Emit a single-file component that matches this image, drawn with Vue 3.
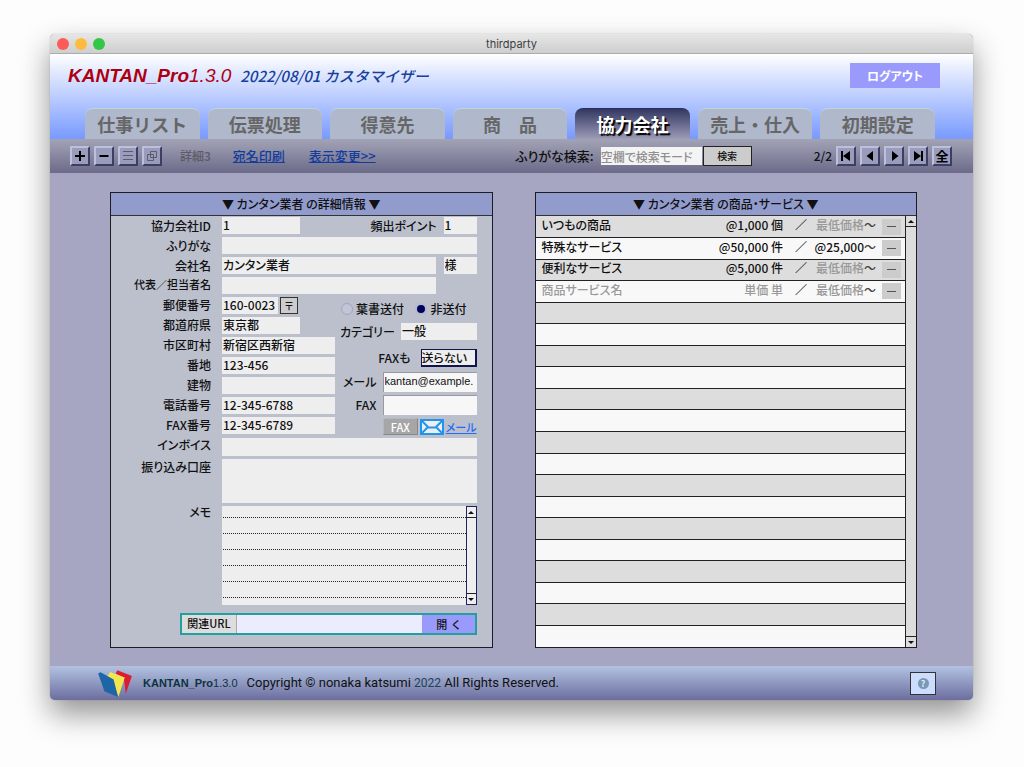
<script setup>
import { ref } from 'vue'

const tabs = ['仕事リスト', '伝票処理', '得意先', '商　品', '協力会社', '売上・仕入', '初期設定']
const activeTab = ref('協力会社')
const search = ref('')
const mailing = ref('no')
const faxOption = ref('送らない')

const addressRows = [
  { id: 'pref', label: '都道府県', value: '東京都', size: 'w-pref' },
  { id: 'city', label: '市区町村', value: '新宿区西新宿', size: 'w-wide' },
  { id: 'street', label: '番地', value: '123-456', size: 'w-wide' },
  { id: 'building', label: '建物', value: '', size: 'w-wide' },
  { id: 'phone', label: '電話番号', value: '12-345-6788', size: 'w-wide' },
  { id: 'faxno', label: 'FAX番号', value: '12-345-6789', size: 'w-wide' },
]

const products = [
  { name: 'いつもの商品', price: '@1,000', unit: '個', min: '最低価格', set: false },
  { name: '特殊なサービス', price: '@50,000', unit: '件', min: '@25,000', set: true },
  { name: '便利なサービス', price: '@5,000', unit: '件', min: '最低価格', set: false },
  { name: '商品サービス名', price: '単価', unit: '単', min: '最低価格', set: false, blank: true },
]
const emptyRows = 16
</script>

<template>
  <div class="desktop">
    <div class="window">
      <div class="titlebar">
        <span class="light red"></span><span class="light amber"></span><span class="light green"></span>
        <span class="wintitle">thirdparty</span>
      </div>

      <header class="header">
        <div class="brandrow">
          <h1 class="brand"><b>KANTAN_Pro</b><span>1.3.0</span></h1>
          <span class="subtitle">2022/08/01 カスタマイザー</span>
          <button class="logout" type="button">ログアウト</button>
        </div>
        <nav class="tabs">
          <button
            v-for="t in tabs"
            :key="t"
            type="button"
            class="tab"
            :class="{ active: t === activeTab }"
            @click="activeTab = t"
          >{{ t }}</button>
        </nav>
      </header>

      <div class="toolbar">
        <div class="btns">
          <button class="sq" type="button" aria-label="追加">
            <svg viewBox="0 0 14 14"><path d="M7 2v10M2 7h10" stroke="#000" stroke-width="2" /></svg>
          </button>
          <button class="sq" type="button" aria-label="削除">
            <svg viewBox="0 0 14 14"><path d="M2.500 7h9" stroke="#000" stroke-width="2" /></svg>
          </button>
          <button class="sq" type="button" aria-label="一覧">
            <svg viewBox="0 0 14 14"><path d="M2 2.500h10M2 6.500h10M2 10.500h10" stroke="#5c5c6c" stroke-width="1" /></svg>
          </button>
          <button class="sq" type="button" aria-label="複製">
            <svg viewBox="0 0 14 14"><path d="M5.500 2.500h6v6h-6zM2.500 5.500h6v6h-6z" fill="none" stroke="#5c5c6c" stroke-width="1" /></svg>
          </button>
        </div>
        <span class="detail">詳細3</span>
        <a href="#" class="tool-link">宛名印刷</a>
        <a href="#" class="tool-link second">表示変更&gt;&gt;</a>
        <label class="search-label" for="search">ふりがな検索:</label>
        <input id="search" v-model="search" class="search" placeholder="空欄で検索モード" />
        <button class="search-btn" type="button">検索</button>
        <span class="count">2/2</span>
        <div class="btns">
          <button class="sq" type="button" aria-label="最初">
            <svg viewBox="0 0 14 14"><path d="M2 2h2v10H2zM11 2v10L4 7z" fill="#000" /></svg>
          </button>
          <button class="sq" type="button" aria-label="前">
            <svg viewBox="0 0 14 14"><path d="M10 2v10L3.500 7z" fill="#000" /></svg>
          </button>
          <button class="sq" type="button" aria-label="次">
            <svg viewBox="0 0 14 14"><path d="M5 2v10L11.500 7z" fill="#000" /></svg>
          </button>
          <button class="sq" type="button" aria-label="最後">
            <svg viewBox="0 0 14 14"><path d="M10 2h2v10h-2zM3 2v10L10 7z" fill="#000" /></svg>
          </button>
          <button class="sq all" type="button">全</button>
        </div>
      </div>

      <main class="main">
        <section class="panel form">
          <h2 class="panel-head">▼ カンタン業者 の詳細情報 ▼</h2>
          <div class="fields">
            <div class="row">
              <label class="lab" for="cid">協力会社ID</label>
              <input id="cid" class="fld w-pref" value="1" />
              <label class="lab-end" for="point">頻出ポイント</label>
              <input id="point" class="fld w-short" value="1" />
            </div>
            <div class="row">
              <label class="lab" for="kana">ふりがな</label>
              <input id="kana" class="fld grow" />
            </div>
            <div class="row">
              <label class="lab" for="company">会社名</label>
              <input id="company" class="fld grow" value="カンタン業者" />
              <input class="fld w-short apart" value="様" aria-label="敬称" />
            </div>
            <div class="row">
              <label class="lab small" for="rep">代表／担当者名</label>
              <input id="rep" class="fld grow rep" />
            </div>

            <div class="split">
              <div class="stack">
                <div class="row">
                  <label class="lab" for="zip">郵便番号</label>
                  <input id="zip" class="fld w-zip" value="160-0023" />
                  <button class="zip-btn" type="button">〒</button>
                </div>
                <div v-for="r in addressRows" :key="r.id" class="row">
                  <label class="lab" :for="r.id">{{ r.label }}</label>
                  <input :id="r.id" class="fld" :class="r.size" :value="r.value" />
                </div>
              </div>
              <div class="contact">
                <div class="radios">
                  <label><input v-model="mailing" type="radio" name="mailing" value="yes" />葉書送付</label>
                  <label><input v-model="mailing" type="radio" name="mailing" value="no" />非送付</label>
                </div>
                <div class="crow">
                  <label for="cat">カテゴリー</label>
                  <input id="cat" class="fld w-cat" value="一般" />
                </div>
                <div class="crow faxopt">
                  <label for="faxopt">FAXも</label>
                  <select id="faxopt" v-model="faxOption" class="pick">
                    <option>送らない</option>
                    <option>送る</option>
                  </select>
                </div>
                <div class="crow">
                  <label for="mail">メール</label>
                  <input id="mail" class="sunk" value="kantan@example." />
                </div>
                <div class="crow">
                  <label for="fax">FAX</label>
                  <input id="fax" class="sunk" />
                </div>
                <div class="crow send">
                  <button class="fax-btn" type="button">FAX</button>
                  <button class="mail-btn" type="button" aria-label="メール送信">
                    <svg viewBox="0 0 24 16">
                      <rect x="1" y="1" width="22" height="14" fill="#eee" stroke="#1e96f0" stroke-width="2" />
                      <path d="M1 1L8 8L1 15M23 1L16 8L23 15M8 8.500h8" fill="none" stroke="#1e96f0" stroke-width="2" />
                    </svg>
                  </button>
                  <a href="#" class="mail-link">メール</a>
                </div>
              </div>
            </div>

            <div class="row">
              <label class="lab raised" for="invoice">インボイス</label>
              <input id="invoice" class="fld grow invoice" />
            </div>
            <div class="row top">
              <label class="lab" for="bank">振り込み口座</label>
              <textarea id="bank" class="fld grow bank"></textarea>
            </div>
            <div class="row top">
              <label class="lab raised" for="memo">メモ</label>
              <textarea id="memo" class="fld grow memo"></textarea>
              <div class="scroll navy">
                <span class="up"></span><span class="down"></span>
              </div>
            </div>
            <div class="url">
              <label for="url">関連URL</label>
              <input id="url" />
              <button type="button">開&nbsp; く</button>
            </div>
          </div>
        </section>

        <section class="panel list">
          <h2 class="panel-head">▼ カンタン業者 の商品・サービス ▼</h2>
          <div class="listbody">
            <table>
              <tbody>
                <tr v-for="p in products" :key="p.name" :class="{ blank: p.blank }">
                  <td class="name">{{ p.name }}</td>
                  <td class="price">{{ p.price }} {{ p.unit }}</td>
                  <td class="slash">／</td>
                  <td class="min" :class="{ set: p.set }">{{ p.min }}<span>〜</span></td>
                  <td class="del"><button type="button" aria-label="削除"></button></td>
                </tr>
                <tr v-for="n in emptyRows" :key="n"><td colspan="5"></td></tr>
              </tbody>
            </table>
            <div class="scroll">
              <span class="up"></span><span class="down"></span>
            </div>
          </div>
        </section>
      </main>

      <footer class="footer">
        <svg class="logo" viewBox="0 0 100 80">
          <path d="M52 10L57 1L100 18L82 70L76 24Z" fill="#dc1c30" />
          <path d="M28 18L36 6L79 22L60 80L44 30Z" fill="#f2e650" />
          <path d="M0 10L7 7L46 28L59 80L19 64Z" fill="#1c66a8" />
        </svg>
        <span class="fbrand"><b>KANTAN_Pro</b>1.3.0</span>
        <span class="copy">Copyright © nonaka katsumi <i>2022</i> All Rights Reserved.</span>
        <button class="help" type="button" aria-label="ヘルプ"><span>?</span></button>
      </footer>
    </div>
  </div>
</template>

<style>
html,
body {
  background: #fdfdfd;
}
</style>

<style scoped>
* {
  box-sizing: border-box;
}
.desktop {
  padding: 34px 51px 67px 50px;
  font-family: "Noto Sans CJK JP", "Noto Sans", sans-serif;
  font-size: 12px;
  line-height: 16px;
  font-weight: 500;
  color: #111;
  font-feature-settings: "palt";
}
button,
input,
select,
textarea {
  font: inherit;
  font-feature-settings: inherit;
  color: inherit;
  margin: 0;
  padding: 0;
  border: 0;
  border-radius: 0;
  outline: 0;
  min-width: 0;
}
.window {
  display: flex;
  flex-direction: column;
  border-radius: 5px;
  overflow: hidden;
  background: #a6a6c3;
  box-shadow: 0 0 1px rgba(0, 0, 0, 0.4), 0 14px 30px rgba(0, 0, 0, 0.42);
}
.titlebar {
  display: flex;
  align-items: center;
  gap: 6px;
  height: 20px;
  padding: 0 7px;
  position: relative;
  background: linear-gradient(#e6e6e6, #cecece);
  border-bottom: 1px solid #acacac;
}
.light {
  width: 12px;
  height: 12px;
  border-radius: 50%;
}
.red {
  background: #fc5b57;
}
.amber {
  background: #fdbc40;
}
.green {
  background: #33c748;
}
.wintitle {
  position: absolute;
  left: 0;
  right: 0;
  text-align: center;
  font-family: Inter, sans-serif;
  font-size: 11px;
  font-weight: 400;
  color: #404040;
}
.header {
  background: linear-gradient(#fff, #789aff);
}
.brandrow {
  display: flex;
  align-items: center;
  height: 43px;
  padding: 0 33px 0 18px;
}
.brand {
  margin: 0;
  font-family: "Liberation Sans", sans-serif;
  font-style: italic;
  font-size: 19px;
  font-weight: 400;
  line-height: 24px;
  color: #ac0010;
}
.subtitle {
  margin-left: 9px;
  font-size: 15px;
  font-style: italic;
  font-feature-settings: normal;
  color: #173f9c;
}
.logout {
  margin-left: auto;
  width: 90px;
  height: 25px;
  background: #9a9afc;
  color: #fff;
  font-size: 12px;
  font-weight: 700;
}
.tabs {
  display: grid;
  grid-template-columns: repeat(7, 1fr);
  gap: 8px;
  padding: 11px 38px 0 35px;
}
.tab {
  height: 31px;
  border-radius: 8px 8px 0 0;
  background: #b0b8cc;
  border-top: 1px solid #c2d4d8;
  color: #666;
  font-size: 18px;
  line-height: 24px;
  font-weight: 700;
  font-feature-settings: normal;
}
.tab.active {
  background: linear-gradient(#333760, #9c9cb8);
  border-top-color: #2c3058;
  color: #fff;
  text-shadow: 2px 2px 1px #000;
}
.toolbar {
  display: flex;
  align-items: center;
  height: 34px;
  padding: 0 21px 0 20px;
  background: linear-gradient(#a3a3b6, #6b6b8a);
}
.btns {
  display: flex;
  gap: 4px;
}
.sq {
  width: 20px;
  height: 20px;
  display: flex;
  align-items: center;
  justify-content: center;
  background: #999cbb;
  border: 2px solid;
  border-color: #bcc0dc #3c3e66 #3c3e66 #bcc0dc;
}
.sq svg {
  width: 14px;
  height: 14px;
}
.all {
  font-size: 13px;
  font-weight: 700;
  color: #000;
}
.detail {
  margin-left: 18px;
  color: #5c5c66;
}
.tool-link {
  margin-left: 22px;
  font-size: 13px;
  color: #143c9c;
}
.second {
  margin-left: 24px;
}
.search-label {
  margin-left: auto;
  font-size: 13px;
}
.search {
  width: 101px;
  height: 18px;
  margin: 0 1px 0 7px;
  background: #f4f4f4;
  font-size: 12px;
}
.search::placeholder {
  color: #909090;
  opacity: 1;
}
.search-btn {
  width: 49px;
  height: 20px;
  background: #ccc;
  border: 1px solid #222;
  font-size: 10px;
}
.count {
  margin: 0 4px 0 62px;
}
.main {
  display: grid;
  grid-template-columns: 1fr 1fr;
  gap: 42px;
  padding: 19px 56px 18px 60px;
}
.panel {
  display: flex;
  flex-direction: column;
  border: 1px solid #1c1c24;
  background: #bcc0cd;
  min-width: 0;
}
.panel-head {
  margin: 0;
  height: 23px;
  line-height: 21px;
  background: #919ccd;
  border-bottom: 1px solid #333;
  text-align: center;
  font-size: 12px;
  font-weight: 500;
}
.fields {
  display: flex;
  flex-direction: column;
  gap: 3px;
  padding: 1px 15px 12px 0;
}
.row {
  display: flex;
  align-items: center;
}
.row.top {
  align-items: flex-start;
}
.lab {
  width: 100px;
  margin-right: 11px;
  text-align: right;
  white-space: nowrap;
  flex-shrink: 0;
}
.stack .lab {
  line-height: 14px;
  padding-bottom: 2px;
}
.small {
  font-size: 11px;
  line-height: 14px;
  padding-bottom: 3px;
}
.raised {
  line-height: 12px;
  padding-bottom: 4px;
}
.fld {
  height: 17px;
  padding: 0 0 2px 1px;
  background: #eee;
}
.grow {
  flex: 1;
}
.w-pref {
  width: 78px;
}
.w-wide {
  width: 113px;
}
.w-zip {
  width: 56px;
}
.w-short {
  width: 33px;
}
.w-cat {
  flex: 0 1 78px;
}
.apart {
  margin-left: 8px;
}
.rep {
  margin-right: 41px;
}
.lab-end {
  margin: 0 7px 0 auto;
}
.zip-btn {
  width: 18px;
  height: 17px;
  margin-left: 2px;
  background: #ccc;
  border: 1px solid #333;
  font-size: 10px;
  line-height: 12px;
}
.split {
  display: flex;
  gap: 5px;
}
.stack {
  display: flex;
  flex-direction: column;
  gap: 3px;
}
.contact {
  flex: 1;
  min-width: 0;
  display: flex;
  flex-direction: column;
  gap: 3px;
}
.radios {
  display: flex;
  justify-content: space-between;
  height: 23px;
  padding: 0 10px 0 1px;
}
.radios label {
  display: flex;
  align-items: center;
  gap: 3px;
}
.radios input {
  appearance: none;
  width: 12px;
  height: 12px;
  border-radius: 50%;
  border: 1px solid #a0a4c4;
  background: #c2c6d4;
}
.radios input:checked {
  background: #00005c;
  border: 2px solid #b4b8cc;
}
.crow {
  display: flex;
  align-items: center;
  justify-content: flex-end;
  gap: 6px;
  white-space: nowrap;
}
.faxopt {
  padding: 6px 0 2px;
  gap: 10px;
}
.pick {
  appearance: none;
  width: 56px;
  height: 18px;
  padding-bottom: 2px;
  background: #eee;
  border: 1px solid #14144c;
  border-right-width: 2px;
  border-bottom-width: 2px;
}
.sunk {
  width: 94px;
  height: 20px;
  padding: 0 0 3px 1px;
  background: #f7f7f7;
  border-top: 1px solid #999;
  border-left: 1px solid #999;
  font-family: "Liberation Sans", sans-serif;
  font-size: 11px;
}
.send {
  gap: 2px;
}
.fax-btn {
  width: 35px;
  height: 17px;
  background: #a6a6a6;
  border: 1px solid;
  border-color: #b8b8b8 #888 #888 #b8b8b8;
  color: #fff;
  font-size: 11px;
  line-height: 12px;
}
.mail-btn {
  width: 24px;
  height: 16px;
  background: none;
}
.mail-btn svg {
  display: block;
}
.mail-link {
  font-size: 11px;
  line-height: 14px;
  color: #1c6cf4;
}
.fld.invoice {
  height: 18px;
}
textarea.fld {
  resize: none;
  display: block;
}
.bank.fld {
  height: 44px;
}
.memo.fld {
  height: 99px;
  line-height: 16px;
  background:
    repeating-linear-gradient(90deg, #eee 0 1px, transparent 1px 2px),
    repeating-linear-gradient(transparent 0 11px, #222 11px 12px, transparent 12px 16px),
    #eee;
  overflow: hidden;
}
.scroll {
  width: 11px;
  display: flex;
  flex-direction: column;
  justify-content: space-between;
  background: #ddd;
  border-left: 1px solid #222;
}
.scroll span {
  height: 11px;
  display: flex;
  align-items: center;
  justify-content: center;
}
.scroll .up {
  border-bottom: 1px solid #222;
}
.scroll .down {
  border-top: 1px solid #222;
}
.scroll span::before {
  content: "";
  border: 3px solid transparent;
}
.scroll .up::before {
  border-top: 0;
  border-bottom-color: #111;
}
.scroll .down::before {
  border-bottom: 0;
  border-top-color: #111;
}
.scroll.navy {
  height: 99px;
  background: #eee;
  border: 1px solid #22225c;
}
.url {
  display: flex;
  height: 22px;
  margin: 5px 0 0 69px;
  border: 2px solid #22a0a0;
}
.url label {
  width: 55px;
  background: #ddd;
  border-right: 1px solid #aaa;
  text-align: center;
  font-size: 11px;
  line-height: 17px;
}
.url input {
  flex: 1;
  background: #ececff;
}
.url button {
  width: 53px;
  background: #9a9afc;
  font-size: 11px;
}
.listbody {
  flex: 1;
  display: flex;
}
table {
  flex: 1;
  border-collapse: collapse;
  table-layout: fixed;
  height: 100%;
}
td {
  height: 21px;
  padding: 0 0 3px;
  border-bottom: 1px solid #222;
  white-space: nowrap;
  line-height: 16px;
}
tr:last-child td {
  border-bottom: 0;
}
tr:nth-child(odd) {
  background: #ddd;
}
tr:nth-child(even) {
  background: #f8f8f8;
}
td.name {
  padding-left: 6px;
}
.price {
  width: 100px;
  text-align: right;
}
td.slash {
  width: 31px;
  padding-left: 5px;
  text-align: center;
}
.min {
  width: 62px;
  text-align: right;
  color: #999;
}
.min span {
  color: #444;
}
.min.set {
  color: #111;
}
.blank .name,
.blank .price {
  color: #999;
}
td.del {
  width: 29px;
  padding: 0 0 0 6px;
}
.del button {
  display: flex;
  align-items: center;
  justify-content: center;
  width: 19px;
  height: 16px;
  background: #ccc;
}
.del button::before {
  content: "";
  width: 9px;
  height: 1px;
  background: #555;
}
.footer {
  display: flex;
  align-items: center;
  height: 34px;
  padding: 0 37px 0 48px;
  background: linear-gradient(#b2c2e2, #6c6e9e);
}
.logo {
  width: 34px;
  height: 27px;
}
.fbrand {
  margin-left: 11px;
  font-family: "Liberation Sans", sans-serif;
  font-size: 11px;
  color: #0c3340;
}
.copy {
  margin-left: 9px;
  font-family: Roboto, sans-serif;
  font-size: 13px;
  font-weight: 400;
}
.copy i {
  font-style: normal;
  font-size: 12px;
  color: #1c4258;
}
.help {
  margin-left: auto;
  width: 26px;
  height: 23px;
  display: flex;
  align-items: center;
  justify-content: center;
  background: #ccdcfc;
  border: 1px solid #333;
}
.help span {
  width: 11px;
  height: 11px;
  border-radius: 50%;
  background: #7898b4;
  color: #dce8fc;
  font-size: 9px;
  line-height: 11px;
  font-weight: 700;
}
</style>
